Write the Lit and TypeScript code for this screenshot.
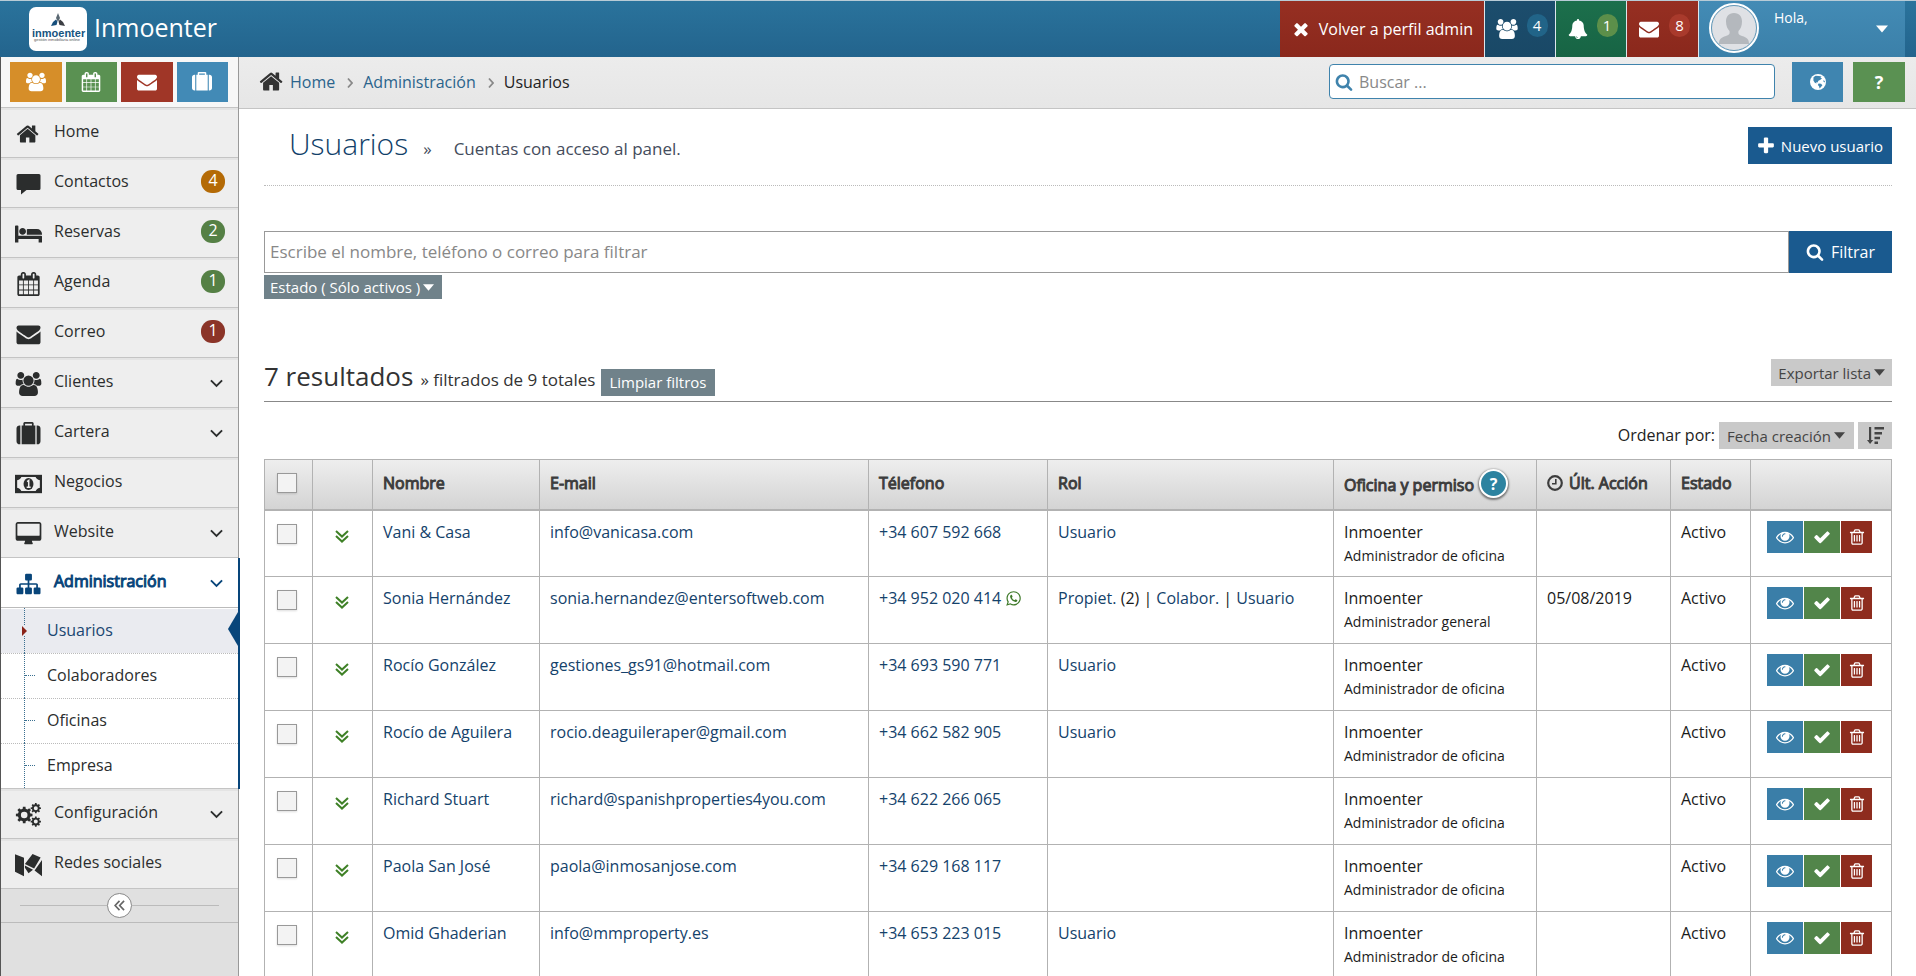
import { LitElement, html, css, svg, nothing } from "lit";
import { customElement, property, state } from "lit/decorators.js";
import { classMap } from "lit/directives/class-map.js";

type Glyph = { box: string; body: unknown };

/* Closed outline of a toothed wheel, plus its hub as a hole. */
const gear = (cx: number, cy: number, r: number, hole: number, teeth: number) => {
  const pts: string[] = [];
  for (let i = 0; i < teeth; i++) {
    const a = (i * 2 * Math.PI) / teeth;
    const s = (2 * Math.PI) / teeth;
    for (const [k, q] of [[-0.3, 0.76], [-0.2, 1], [0.2, 1], [0.3, 0.76]]) {
      pts.push(`${(cx + r * q * Math.cos(a + s * k)).toFixed(2)} ${(cy + r * q * Math.sin(a + s * k)).toFixed(2)}`);
    }
  }
  return `M${pts.join("L")}ZM${cx - hole} ${cy}a${hole} ${hole} 0 1 0 ${hole * 2} 0a${hole} ${hole} 0 1 0 ${-hole * 2} 0Z`;
};

const solid = (box: string, d: string): Glyph => ({
  box,
  body: svg`<path fill="currentColor" fill-rule="evenodd" d=${d}></path>`,
});
const SQ = "0 0 1792 1792";

const GLYPHS: Record<string, Glyph> = {
  home: solid(SQ, "M1408 992v480q0 26-19 45t-45 19h-384v-384h-256v384h-384q-26 0-45-19t-19-45v-480q0-1 .5-3t.5-3l575-474 575 474q1 2 1 6zm223-69l-62 74q-8 9-21 11h-3q-13 0-21-7l-692-577-692 577q-12 8-24 7-13-2-21-11l-62-74q-8-10-7-23.5t11-21.5l719-599q32-26 76-26t76 26l244 204v-195q0-14 9-23t23-9h192q14 0 23 9t9 23v408l219 182q10 8 11 21.5t-7 23.5z"),
  search: solid(SQ, "M1216 832q0-185-131.5-316.5t-316.5-131.5-316.5 131.5-131.5 316.5 131.5 316.5 316.5 131.5 316.5-131.5 131.5-316.5zm512 832q0 52-38 90t-90 38q-54 0-90-38l-343-342q-179 124-399 124-143 0-273.5-55.5t-225-150-150-225-55.5-273.5 55.5-273.5 150-225 225-150 273.5-55.5 273.5 55.5 225 150 150 225 55.5 273.5q0 220-124 399l343 343q37 37 37 90z"),
  mail: solid(SQ, "M1792 710v794q0 66-47 113t-113 47h-1472q-66 0-113-47t-47-113v-794q44 49 101 87 362 246 497 345 57 42 92.5 65.5t94.5 48 110 24.5h2q51 0 110-24.5t94.5-48 92.5-65.5q170-123 498-345 57-39 100-87zm0-294q0 79-49 151t-122 123q-376 261-468 325-10 7-42.5 31t-54 38.5-52 32.5-57.5 27-50 9h-2q-23 0-50-9t-57.5-27-52-32.5-54-38.5-42.5-31q-91-64-262-182.5t-205-142.5q-62-42-117-115.5t-55-136.5q0-78 41.5-130t118.5-52h1472q65 0 112.5 47t47.5 113z"),
  check: solid(SQ, "M1671 566q0 40-28 68l-724 724-136 136q-28 28-68 28t-68-28l-136-136-362-362q-28-28-28-68t28-68l136-136q28-28 68-28t68 28l294 295 656-657q28-28 68-28t68 28l136 136q28 28 28 68z"),
  times: solid(SQ, "M1490 1322q0 40-28 68l-136 136q-28 28-68 28t-68-28l-294-294-294 294q-28 28-68 28t-68-28l-136-136q-28-28-28-68t28-68l294-294-294-294q-28-28-28-68t28-68l136-136q28-28 68-28t68 28l294 294 294-294q28-28 68-28t68 28l136 136q28 28 28 68t-28 68l-294 294 294 294q28 28 28 68z"),
  plus: solid(SQ, "M1600 736v192q0 40-28 68t-68 28h-416v416q0 40-28 68t-68 28h-192q-40 0-68-28t-28-68v-416h-416q-40 0-68-28t-28-68v-192q0-40 28-68t68-28h416v-416q0-40 28-68t68-28h192q40 0 68 28t28 68v416h416q40 0 68 28t28 68z"),
  eye: solid(SQ, "M1664 960q-152-236-381-353 61 104 61 225 0 185-131.5 316.5t-316.5 131.5-316.5-131.5-131.5-316.5q0-121 61-225-229 117-381 353 133 205 333.5 326.5t434.5 121.5 434.5-121.5 333.5-326.5zm-720-384q0-20-14-34t-34-14q-125 0-214.5 89.5t-89.5 214.5q0 20 14 34t34 14 34-14 14-34q0-86 61-147t147-61q20 0 34-14t14-34zm848 384q0 34-20 69-140 230-376.5 368.5t-499.5 138.5-499.5-139-376.5-368q-20-35-20-69t20-69q140-229 376.5-368t499.5-139 499.5 139 376.5 368q20 35 20 69z"),
  trash: solid(SQ, "M704 736v576q0 14-9 23t-23 9h-64q-14 0-23-9t-9-23v-576q0-14 9-23t23-9h64q14 0 23 9t9 23zm256 0v576q0 14-9 23t-23 9h-64q-14 0-23-9t-9-23v-576q0-14 9-23t23-9h64q14 0 23 9t9 23zm256 0v576q0 14-9 23t-23 9h-64q-14 0-23-9t-9-23v-576q0-14 9-23t23-9h64q14 0 23 9t9 23zm128 724v-948h-896v948q0 22 7 40.5t14.5 27 10.5 8.5h832q3 0 10.5-8.5t14.5-27 7-40.5zm-672-1076h448l-48-117q-7-9-17-11h-317q-10 2-17 11zm928 32v64q0 14-9 23t-23 9h-96v948q0 83-47 143.5t-113 60.5h-832q-66 0-113-58.5t-47-141.5v-952h-96q-14 0-23-9t-9-23v-64q0-14 9-23t23-9h309l70-167q15-37 54-63t79-26h320q40 0 79 26t54 63l70 167h309q14 0 23 9t9 23z"),
  users: solid("-64 0 1920 1792", "M529 896q-162 5-265 128h-134q-82 0-138-40.5t-56-118.5q0-353 124-353 6 0 43.5 21t97.5 42.5 119 21.5q67 0 133-23-5 37-5 66 0 139 81 256zm1071 637q0 120-73 189.5t-194 69.5h-874q-121 0-194-69.5t-73-189.5q0-53 3.5-103.5t14-109 26.5-108.5 43-97.5 62-81 85.5-53.5 111.5-20q10 0 43 21.5t73 48 107 48 135 21.5 135-21.5 107-48 73-48 43-21.5q61 0 111.5 20t85.5 53.5 62 81 43 97.5 26.5 108.5 14 109 3.5 103.5zm-1024-1277q0 106-75 181t-181 75-181-75-75-181 75-181 181-75 181 75 75 181zm704 384q0 159-112.5 271.5t-271.5 112.5-271.5-112.5-112.5-271.5 112.5-271.5 271.5-112.5 271.5 112.5 112.5 271.5zm576 225q0 78-56 118.5t-138 40.5h-134q-103-123-265-128 81-117 81-256 0-29-5-66 66 23 133 23 59 0 119-21.5t97.5-42.5 43.5-21q124 0 124 353zm-128-609q0 106-75 181t-181 75-181-75-75-181 75-181 181-75 181 75 75 181z"),
  calendar: solid(SQ, "M192 1664h288v-288h-288v288zm352 0h320v-288h-320v288zm-352-352h288v-320h-288v320zm352 0h320v-320h-320v320zm-352-384h288v-288h-288v288zm736 736h320v-288h-320v288zm-384-736h320v-288h-320v288zm768 736h288v-288h-288v288zm-384-352h320v-320h-320v320zm-352-864v-288q0-13-9.5-22.5t-22.5-9.5h-64q-13 0-22.5 9.5t-9.5 22.5v288q0 13 9.5 22.5t22.5 9.5h64q13 0 22.5-9.5t9.5-22.5zm736 864h288v-320h-288v320zm-384-384h320v-288h-320v288zm384 0h288v-288h-288v288zm32-480v-288q0-13-9.5-22.5t-22.5-9.5h-64q-13 0-22.5 9.5t-9.5 22.5v288q0 13 9.5 22.5t22.5 9.5h64q13 0 22.5-9.5t9.5-22.5zm384-64v1280q0 52-38 90t-90 38h-1408q-52 0-90-38t-38-90v-1280q0-52 38-90t90-38h128v-96q0-66 47-113t113-47h64q66 0 113 47t47 113v96h384v-96q0-66 47-113t113-47h64q66 0 113 47t47 113v96h128q52 0 90 38t38 90z"),
  suitcase: solid(SQ, "M640 256h512v-128h-512v128zm-352 0v1408h-64q-92 0-158-66t-66-158v-960q0-92 66-158t158-66h64zm1120 0v1408h-1024v-1408h128v-160q0-40 28-68t68-28h576q40 0 68 28t28 68v160h128zm384 224v960q0 92-66 158t-158 66h-64v-1408h64q92 0 158 66t66 158z"),
  bell: solid(SQ, "M912 1696q0-16-16-16-59 0-101.5-42.5t-42.5-101.5q0-16-16-16t-16 16q0 73 51.5 124.5t124.5 51.5q16 0 16-16zm816-288q0 52-38 90t-90 38h-448q0 106-75 181t-181 75-181-75-75-181h-448q-52 0-90-38t-38-90q50-42 91-88t85-119.5 74.5-158.5 50-206 19.5-260q0-152 117-282.5t307-158.5q-8-19-8-39 0-40 28-68t68-28 68 28 28 68q0 20-8 39 190 28 307 158.5t117 282.5q0 139 19.5 260t50 206 74.5 158.5 85 119.5 91 88z"),
  bed: solid("0 256 2048 1280", "M256 1024h1728q26 0 45 19t19 45v448h-256v-256h-1536v256h-256v-1216q0-26 19-45t45-19h128q26 0 45 19t19 45v704zm576-320q0-106-75-181t-181-75-181 75-75 181 75 181 181 75 181-75 75-181zm1216 256v-64q0-159-112.5-271.5t-271.5-112.5h-704q-26 0-45 19t-19 45v384h1152z"),
  desktop: solid("-64 0 1920 1792", "M1728 992v-832q0-13-9.5-22.5t-22.5-9.5h-1600q-13 0-22.5 9.5t-9.5 22.5v832q0 13 9.5 22.5t22.5 9.5h1600q13 0 22.5-9.5t9.5-22.5zm128-832v1088q0 66-47 113t-113 47h-544q0 37 16 77.5t32 71 16 43.5q0 26-19 45t-45 19h-512q-26 0-45-19t-19-45q0-14 16-44t32-70 16-78h-544q-66 0-113-47t-47-113v-1088q0-66 47-113t113-47h1600q66 0 113 47t47 113z"),
  sitemap: solid(SQ, "M1792 1248v320q0 40-28 68t-68 28h-320q-40 0-68-28t-28-68v-320q0-40 28-68t68-28h96v-192h-512v192h96q40 0 68 28t28 68v320q0 40-28 68t-68 28h-320q-40 0-68-28t-28-68v-320q0-40 28-68t68-28h96v-192h-512v192h96q40 0 68 28t28 68v320q0 40-28 68t-68 28h-320q-40 0-68-28t-28-68v-320q0-40 28-68t68-28h96v-192q0-52 38-90t90-38h512v-192h-96q-40 0-68-28t-28-68v-320q0-40 28-68t68-28h320q40 0 68 28t28 68v320q0 40-28 68t-68 28h-96v192h512q52 0 90 38t38 90v192h96q40 0 68 28t28 68z"),
  whatsapp: solid(SQ, "M1113 974q13 0 97.5 44t89.5 53q2 5 2 15 0 33-17 76-16 39-71 65.5t-102 26.5q-57 0-190-62-98-45-170-118t-148-185q-72-107-71-194v-8q3-91 74-158 24-22 52-22 6 0 18 1.5t19 1.5q19 0 26.5 6.5t15.5 27.5q8 20 33 88t25 75q0 21-34.5 57.5t-34.5 46.5q0 7 5 15 34 73 102 137 56 53 151 101 12 7 22 7 15 0 54-48.5t52-48.5zm-203 530q127 0 243.5-50t200.5-134 134-200.5 50-243.5-50-243.5-134-200.5-200.5-134-243.5-50-243.5 50-200.5 134-134 200.5-50 243.5q0 203 120 368l-79 233 242-77q158 104 345 104zm0-1382q153 0 292.5 60t240.5 161 161 240.5 60 292.5-60 292.5-161 240.5-240.5 161-292.5 60q-195 0-365-94l-417 134 136-405q-108-178-108-389 0-153 60-292.5t161-240.5 240.5-161 292.5-60z"),
  comment: solid("0 0 24 24", "M1.500 2H22.500Q24 2 24 3.500V16.500Q24 18 22.500 18H10L4.500 22.600V18H1.500Q0 18 0 16.500V3.500Q0 2 1.500 2Z"),
  cogs: solid("0 0 25 24", gear(8.2, 12, 8.400, 3.300, 8) + gear(19.800, 5.200, 5.200, 2, 8) + gear(19.800, 18.600, 5.200, 2, 8)),
  money: {
    box: "0 0 25 17",
    body: svg`<rect x="1" y="1" width="23" height="15" fill="none" stroke="currentColor" stroke-width="2"></rect>
      <path fill="currentColor" d="M1 1H6A5 4 0 0 1 1 5ZM24 1V5A5 4 0 0 1 19 1ZM1 16V12A5 4 0 0 1 6 16ZM24 16H19A5 4 0 0 1 24 12Z"></path>
      <ellipse cx="12.500" cy="8.500" rx="4.600" ry="5.600" fill="currentColor"></ellipse>
      <path d="M11.200 6.200L12.700 5.200V11.400M10.800 11.500H14.500" fill="none" stroke="#eee" stroke-width="1.400"></path>`,
  },
  social: {
    box: "0 0 24 20",
    body: svg`<path fill="currentColor" d="M0 0.500L8 3.600V20L0 16ZM8.800 9L15.600 0.200L22.800 3.400L17 13.200ZM8.800 10.400L16 14.200L12 17.400L8.800 12.500ZM24 5.500V20L17.400 14.800Z"></path>`,
  },
  globe: {
    box: "0 0 16 16",
    body: svg`<circle cx="8" cy="8" r="8" fill="currentColor"></circle>
      <path fill="#3f85b0" d="M3.500 3.200L5.600 1.800L9 2L11.600 2.400L10.400 3.600L12 4.600L10 6L8.400 6.800L7.600 8.400L6 8.200L6.600 9.600L4.800 8.800L3.400 6.600ZM8.600 9.600L11 9.800L12.400 11.200L11 13L9.600 14.400L9 12.200L7.800 11ZM13.600 6L15 7.400L14.400 8.600L13.400 7.400Z"></path>`,
  },
  clock: {
    box: "0 0 16 16",
    body: svg`<circle cx="8" cy="8" r="6.800" fill="none" stroke="currentColor" stroke-width="2.200"></circle>
      <path d="M8.800 4V8.800H5" fill="none" stroke="currentColor" stroke-width="1.600"></path>`,
  },
  sort: {
    box: "0 0 17 17",
    body: svg`<path fill="currentColor" d="M2 0H4.200V13H6.200L3.100 17L0 13H2ZM7.500 0H17V2.500H7.500ZM7.500 5H15V7.400H7.500ZM7.500 9.800H13V12.200H7.500ZM7.500 14.500H11V17H7.500Z"></path>`,
  },
  chevron: {
    box: "0 0 14 9",
    body: svg`<path d="M1 1.200L7 7.200L13 1.200" fill="none" stroke="currentColor" stroke-width="2"></path>`,
  },
  crumb: {
    box: "0 0 6 12",
    body: svg`<path d="M1 1.500L5 6L1 10.500" fill="none" stroke="currentColor" stroke-width="1.800"></path>`,
  },
  expand: {
    box: "0 0 14 13",
    body: svg`<path d="M1 1L7 6.600L13 1M1 6L7 11.600L13 6" fill="none" stroke="currentColor" stroke-width="2"></path>`,
  },
  collapse: {
    box: "0 0 12 12",
    body: svg`<path d="M6 1L1.200 6L6 11M11 1L6.200 6L11 11" fill="none" stroke="currentColor" stroke-width="1.800"></path>`,
  },
  caret: { box: "0 0 10 6", body: svg`<path fill="currentColor" d="M0 0H10L5 6Z"></path>` },
};

@customElement("ui-icon")
class UiIcon extends LitElement {
  @property() name = "home";
  static styles = css`
    :host { display: inline-flex; width: 16px; height: 16px; flex: none; }
    .glyph { display: block; width: 100%; height: 100%; }
  `;
  render() {
    const g = GLYPHS[this.name];
    return html`<svg class="glyph" viewBox=${g.box} aria-hidden="true">${g.body}</svg>`;
  }
}

const shared = css`
  * { box-sizing: border-box; }
  button, input, select { font: inherit; color: inherit; margin: 0; padding: 0; border: 0; border-radius: 0; background: none; }
  button { cursor: pointer; display: inline-flex; align-items: center; justify-content: center; }
  a { text-decoration: none; color: inherit; }
  .heavy { -webkit-text-stroke: 1px currentColor; }
`;

@customElement("top-bar")
class TopBar extends LitElement {
  static styles = [shared, css`
    :host { display: block; }
    .bar { display: flex; height: 57px; border-top: 1px solid #b8cbd6; padding: 0 11px 0 29px; background: linear-gradient(#2a739c, #23648d); color: #fff; }
    .brand { display: flex; align-items: center; gap: 7px; font-size: 25px; }
    .name { padding-bottom: 4px; }
    .logo { display: block; width: 58px; height: 44px; }
    .logo-name { font: 700 11px "Liberation Sans", sans-serif; fill: #16547f; }
    .logo-sub { font: 4px "Liberation Sans", sans-serif; fill: #555; }
    .tools { display: flex; margin-left: auto; }
    .tool { border-right: 1px solid #dde6eb; gap: 9px; height: 56px; }
    .back { background: linear-gradient(#962f22, #8a281c); padding: 0 11px; gap: 8px; }
    .back ui-icon { width: 20px; height: 20px; }
    .tile { width: 71px; padding-left: 3px; }
    .count { width: 21px; height: 23px; border-radius: 11px; font-size: 15px; line-height: 22px; text-align: center; margin-bottom: 7px; }
    .navy { background: linear-gradient(#1c4d6d, #194866); }
    .navy .count { background: #216488; }
    .green { background: linear-gradient(#1c6f4c, #176444); }
    .green .count { background: #5c8f4a; }
    .red { background: linear-gradient(#962f22, #8a281c); width: 72px; }
    .red .count { background: #a93a2c; }
    .big { width: 22px; height: 20px; }
    .bell { width: 20px; height: 20px; }
    .user { display: flex; width: 206px; padding: 2px 17px 0 10px; background: linear-gradient(#438bb5, #3b80a9); align-items: flex-start; justify-content: flex-start; height: 56px; }
    .avatar { width: 50px; height: 50px; flex: none; }
    .hello { font-size: 14px; line-height: 20px; margin: 5px auto 0 15px; }
    .more { width: 12px; height: 8px; margin-top: 22px; }
  `];
  render() {
    return html`<header class="bar">
      <a class="brand" href="#">
        <svg class="logo" viewBox="0 0 58 44" role="img" aria-label="inmoenter">
          <rect width="58" height="44" rx="7" fill="#fff"></rect>
          <path d="M29 6L31 11L29.500 14H28.500L27 11Z" fill="#5a6872"></path>
          <path d="M28.500 14.500L27.500 18L22 19L24 15L27 12.500Z" fill="#174f7c"></path>
          <path d="M29.500 14.500L30.500 18L36 19L34 15L31 12.500Z" fill="#3c3f44"></path>
          <text class="logo-name" x="3" y="30">inmoenter</text>
          <text class="logo-sub" x="5" y="34">gestión inmobiliaria online</text>
        </svg>
        <span class="name">Inmoenter</span>
      </a>
      <div class="tools">
        <button class="tool back"><ui-icon name="times"></ui-icon>Volver a perfil admin</button>
        <button class="tool tile navy" aria-label="Usuarios"><ui-icon class="big" name="users"></ui-icon><span class="count">4</span></button>
        <button class="tool tile green" aria-label="Avisos"><ui-icon class="bell" name="bell"></ui-icon><span class="count">1</span></button>
        <button class="tool tile red" aria-label="Correo"><ui-icon class="big" name="mail"></ui-icon><span class="count">8</span></button>
        <button class="user">
          <svg class="avatar" viewBox="0 0 50 50" aria-hidden="true">
            <circle cx="25" cy="25" r="24" fill="#dfe1e5" stroke="#fff" stroke-width="2"></circle>
            <circle cx="25" cy="25" r="22.500" fill="none" stroke="#5f97b8" stroke-width="1"></circle>
            <path d="M25 10C30.500 10 33 14 33 18.500C33 23 31.500 26 29.500 28C29 31 30 32 33 33C38 34.600 40 36 40 41H10C10 36 12 34.600 17 33C20 32 21 31 20.500 28C18.500 26 17 23 17 18.500C17 14 19.500 10 25 10Z" fill="#b4b8bd"></path>
          </svg>
          <span class="hello">Hola,</span>
          <ui-icon class="more" name="caret"></ui-icon>
        </button>
      </div>
    </header>`;
  }
}

type Entry = { icon: string; label: string; badge?: string; tone?: string; open?: boolean; sub?: string[]; more?: boolean };
const MENU: Entry[] = [
  { icon: "home", label: "Home" },
  { icon: "comment", label: "Contactos", badge: "4", tone: "amber" },
  { icon: "bed", label: "Reservas", badge: "2", tone: "leaf" },
  { icon: "calendar", label: "Agenda", badge: "1", tone: "leaf" },
  { icon: "mail", label: "Correo", badge: "1", tone: "brick" },
  { icon: "users", label: "Clientes", more: true },
  { icon: "suitcase", label: "Cartera", more: true },
  { icon: "money", label: "Negocios" },
  { icon: "desktop", label: "Website", more: true },
  { icon: "sitemap", label: "Administración", more: true, open: true, sub: ["Usuarios", "Colaboradores", "Oficinas", "Empresa"] },
  { icon: "cogs", label: "Configuración", more: true },
  { icon: "social", label: "Redes sociales" },
];

@customElement("side-nav")
class SideNav extends LitElement {
  static styles = [shared, css`
    :host { display: block; width: 240px; flex: none; }
    .nav { height: 100%; width: 239px; border-left: 1px solid #555; border-right: 1px solid #999; background: #e0e0e0; color: #2b2d2d; }
    .quick { display: flex; gap: 4px; padding: 5px 10px 5px 9px; height: 51px; background: #f7f7f7; border-bottom: 1px solid #c4c4c4; color: #fff; }
    .sq { flex: 1; height: 40px; }
    .sq ui-icon { width: 20px; height: 20px; }
    .amber { background: #d68e29; } .leaf { background: #5a9152; } .brick { background: #a03627; } .sky { background: #428ab6; }
    .list { list-style: none; margin: 0; padding: 0; }
    .row { display: flex; align-items: center; height: 50px; padding: 0 13px 3px 14px; border-bottom: 1px solid #c4c4c4; background: linear-gradient(#e4e4e4 2px, #eee 2px); }
    .row ui-icon.lead { width: 27px; height: 24px; margin: 5px 12px 0 0; }
    .text { flex: 1; }
    .badge { width: 24px; height: 23px; border-radius: 11px; color: #fff; font-size: 16px; line-height: 21px; text-align: center; }
    .badge.amber { background: #b46a06; } .badge.leaf { background: #558045; } .badge.brick { background: #8b3428; }
    .arrow { width: 13px; height: 9px; margin: 4px 2px 0 0; }
    .open { background: #fff; color: #08457a; border-color: #bbb; }
    .active { margin-right: -2px; border-right: 2px solid #08457a; background: #fff; position: relative; }
    .sub { list-style: none; margin: 0; padding: 0; border-bottom: 1px solid #c4c4c4; background: #fff; }
    .leafrow { display: flex; align-items: center; height: 45px; padding: 0 0 0 23px; border-top: 1px dotted #bbb; position: relative; }
    .leafrow.current { border-top: 1px solid #fff; background: #eaebf0; color: #1a4670; }
    .stem { align-self: stretch; width: 11px; margin: -1px 12px 0 0; border-left: 1px dotted #3a6f90; display: flex; align-items: center; }
    .stem::before { content: ""; flex: 1; border-top: 1px dotted #3a6f90; }
    .current .stem::before { flex: none; margin-left: -3px; border: 5px solid transparent; border-left: 5px solid #8b2318; border-right: 0; background: #eaebf0; }
    .subtext { padding-bottom: 3px; }
    .flag { position: absolute; right: 0; top: 3px; width: 10px; height: 34px; background: #08457a; clip-path: polygon(100% 0, 0 50%, 100% 100%); }
    .fold { height: 34px; display: flex; align-items: center; padding: 0 19px; border-bottom: 1px solid #bbb; }
    .fold::before, .fold::after { content: ""; flex: 1; border-top: 1px solid #bbb; }
    .knob { width: 25px; height: 25px; border: 1px solid #888; border-radius: 50%; background: #fff; color: #666; }
    .knob ui-icon { width: 11px; height: 11px; }
  `];
  render() {
    return html`<nav class="nav" aria-label="Principal">
      <div class="quick">
        <button class="sq amber" aria-label="Clientes"><ui-icon name="users"></ui-icon></button>
        <button class="sq leaf" aria-label="Agenda"><ui-icon name="calendar"></ui-icon></button>
        <button class="sq brick" aria-label="Correo"><ui-icon name="mail"></ui-icon></button>
        <button class="sq sky" aria-label="Cartera"><ui-icon name="suitcase"></ui-icon></button>
      </div>
      <ul class="list">
        ${MENU.map((m) => html`<li class=${classMap({ active: !!m.open })}>
          <a class=${classMap({ row: true, open: !!m.open })} href="#">
            <ui-icon class="lead" name=${m.icon}></ui-icon>
            <span class=${classMap({ text: true, heavy: !!m.open })}>${m.label}</span>
            ${m.badge ? html`<span class="badge ${m.tone}">${m.badge}</span>` : nothing}
            ${m.more ? html`<ui-icon class="arrow" name="chevron"></ui-icon>` : nothing}
          </a>
          ${m.sub ? html`<ul class="sub">${m.sub.map((s, i) => html`<li>
            <a class=${classMap({ leafrow: true, current: i === 0 })} href="#"><span class="stem"></span><span class="subtext">${s}</span>${i === 0 ? html`<span class="flag"></span>` : nothing}</a>
          </li>`)}</ul>` : nothing}
        </li>`)}
      </ul>
      <div class="fold"><button class="knob" aria-label="Plegar menú"><ui-icon name="collapse"></ui-icon></button></div>
    </nav>`;
  }
}

type User = { name: string; mail: string; phone: string; wa?: boolean; role: string; scope: string; last?: string };
const OFFICE = "Administrador de oficina";
const USERS: User[] = [
  { name: "Vani & Casa", mail: "info@vanicasa.com", phone: "+34 607 592 668", role: "user", scope: OFFICE },
  { name: "Sonia Hernández", mail: "sonia.hernandez@entersoftweb.com", phone: "+34 952 020 414", wa: true, role: "all", scope: "Administrador general", last: "05/08/2019" },
  { name: "Rocío González", mail: "gestiones_gs91@hotmail.com", phone: "+34 693 590 771", role: "user", scope: OFFICE },
  { name: "Rocío de Aguilera", mail: "rocio.deaguileraper@gmail.com", phone: "+34 662 582 905", role: "user", scope: OFFICE },
  { name: "Richard Stuart", mail: "richard@spanishproperties4you.com", phone: "+34 622 266 065", role: "", scope: OFFICE },
  { name: "Paola San José", mail: "paola@inmosanjose.com", phone: "+34 629 168 117", role: "", scope: OFFICE },
  { name: "Omid Ghaderian", mail: "info@mmproperty.es", phone: "+34 653 223 015", role: "user", scope: OFFICE },
];

@customElement("user-table")
class UserTable extends LitElement {
  @state() private picked = new Set<number>();
  static styles = [shared, css`
    :host { display: block; }
    .grid { width: 100%; table-layout: fixed; border-collapse: collapse; line-height: 24px; color: #1b1b1b; }
    .c-check { width: 48px; } .c-open { width: 60px; } .c-name { width: 167px; } .c-mail { width: 329px; } .c-phone { width: 179px; }
    .c-office { width: 203px; } .c-last { width: 134px; } .c-state { width: 80px; } .c-act { width: 141px; }
    th, td { border: 1px solid #b2b2b2; text-align: left; vertical-align: top; padding: 9px 0 0 10px; }
    th { height: 50px; font-weight: 400; color: #3d3d3d; border-bottom: 2px solid #b2b2b2; padding-top: 11px; white-space: nowrap; }
    thead tr { background: linear-gradient(#eee, #d3d3d3); }
    td { height: 67px; }
    td a { color: #14426b; }
    .mid { text-align: center; padding: 13px 3px 0 0; }
    .mid.more { padding-right: 1px; }
    .tick { appearance: none; display: block; width: 20px; height: 20px; margin: 0 auto; border: 1px solid #999; background: #f3f3f3; box-shadow: 0 1px 2px #0002; }
    .tick:checked { background: #3f85b0; }
    .plus { color: #3f8127; padding-top: 6px; }
    .plus ui-icon { width: 14px; height: 13px; }
    .small { font-size: 14px; display: block; }
    .wa { color: #3f7a2a; width: 17px; height: 17px; margin-left: 4px; vertical-align: -3px; }
    .office { display: flex; align-items: center; gap: 5px; }
    .low { padding-top: 13px; }
    .help { width: 29px; height: 29px; margin: -4px 0 -1px; border-radius: 50%; border: 2px solid #fff; background: #2d83a0; color: #fff; font-weight: 700; font-size: 16px; box-shadow: 0 1px 2px 1px #777; }
    .last { display: flex; align-items: center; gap: 6px; }
    .acts { padding: 10px 0 0 16px; }
    .btns { display: flex; gap: 1px; color: #fff; }
    .btn { width: 36px; height: 32px; }
    .btn ui-icon { width: 18px; height: 18px; }
    .view { background: #3a7ea8; } .ok { background: #52854a; } .del { background: #8e2c1e; width: 31px; }
  `];
  private toggle(i: number) {
    const next = new Set(this.picked);
    next.has(i) ? next.delete(i) : next.add(i);
    this.picked = next;
  }
  private toggleAll(e: Event) {
    this.picked = (e.target as HTMLInputElement).checked ? new Set(USERS.map((_, i) => i)) : new Set();
  }
  render() {
    return html`<table class="grid">
      <colgroup><col class="c-check"><col class="c-open"><col class="c-name"><col class="c-mail"><col class="c-phone"><col><col class="c-office"><col class="c-last"><col class="c-state"><col class="c-act"></colgroup>
      <thead><tr>
        <th class="mid"><input class="tick" type="checkbox" aria-label="Seleccionar todos" @change=${this.toggleAll}></th>
        <th></th>
        <th><span class="heavy">Nombre</span></th><th><span class="heavy">E-mail</span></th><th><span class="heavy">Télefono</span></th><th><span class="heavy">Rol</span></th>
        <th class="low"><span class="office"><span class="heavy">Oficina y permiso</span><button class="help" aria-label="Ayuda">?</button></span></th>
        <th><span class="last"><ui-icon name="clock"></ui-icon><span class="heavy">Últ. Acción</span></span></th>
        <th><span class="heavy">Estado</span></th><th></th>
      </tr></thead>
      <tbody>${USERS.map((u, i) => html`<tr>
        <td class="mid"><input class="tick" type="checkbox" aria-label=${u.name} .checked=${this.picked.has(i)} @change=${() => this.toggle(i)}></td>
        <td class="mid more"><button class="plus" aria-label="Desplegar"><ui-icon name="expand"></ui-icon></button></td>
        <td><a href="#">${u.name}</a></td>
        <td><a href="mailto:${u.mail}">${u.mail}</a></td>
        <td><a href="#">${u.phone}${u.wa ? html`<ui-icon class="wa" name="whatsapp"></ui-icon>` : nothing}</a></td>
        <td>${u.role === "all" ? html`<a href="#">Propiet.</a> (2) | <a href="#">Colabor.</a> | ` : nothing}${u.role ? html`<a href="#">Usuario</a>` : nothing}</td>
        <td>Inmoenter<span class="small">${u.scope}</span></td>
        <td>${u.last ?? nothing}</td>
        <td>Activo</td>
        <td class="acts"><div class="btns">
          <button class="btn view" aria-label="Ver"><ui-icon name="eye"></ui-icon></button>
          <button class="btn ok" aria-label="Activar"><ui-icon name="check"></ui-icon></button>
          <button class="btn del" aria-label="Borrar"><ui-icon name="trash"></ui-icon></button>
        </div></td>
      </tr>`)}</tbody>
    </table>`;
  }
}

@customElement("app-root")
class AppRoot extends LitElement {
  static styles = [shared, css`
    :host { display: flex; flex-direction: column; height: 100vh; overflow: hidden; font: 16px/24px "Open Sans", "Noto Sans", sans-serif; background: #fff; color: #222; }
    .body { display: flex; flex: 1; min-height: 0; }
    .main { flex: 1; min-width: 0; overflow: auto; scrollbar-width: none; margin-left: -1px; }
    .crumbs { display: flex; align-items: center; height: 52px; padding: 0 11px 2px 20px; background: linear-gradient(#ececec, #e6e6e6); border-bottom: 1px solid #c4c4c4; }
    .trail { display: flex; align-items: center; }
    .trail a { color: #2b648c; }
    .trail .house { width: 26px; height: 25px; margin-right: 5px; color: #333; }
    .trail .sep { width: 6px; height: 12px; margin: 3px 10px 0 12px; color: #888; }
    .find { display: flex; align-items: center; gap: 6px; margin-left: auto; width: 446px; height: 35px; padding: 0 5px; border: 1px solid #3f83ac; border-radius: 4px; background: #fff; color: #3f83ac; }
    .find ui-icon { width: 18px; height: 18px; }
    .find input { flex: 1; min-width: 0; outline: 0; color: #333; }
    input::placeholder { color: #888; opacity: 1; }
    .quick { width: 51px; height: 40px; color: #fff; margin-left: 17px; background: #3f85b0; }
    .quick.help { width: 52px; margin-left: 10px; background: #5a9152; font-weight: 700; font-size: 18px; }
    .page { padding: 0 24px 0 25px; }
    .head { display: flex; justify-content: space-between; padding: 18px 0 0 25px; height: 77px; border-bottom: 1px dotted #bbb; }
    .title { margin: 0; font-size: 30px; line-height: 34px; font-weight: 300; color: #123f69; display: flex; align-items: baseline; }
    .lead { font-size: 17px; font-weight: 400; color: #444c5c; margin-left: 15px; white-space: pre; }
    .lead + .lead { margin-left: 22px; }
    .primary { background: #1a5a8f; color: #fff; height: 37px; gap: 5px; padding: 0 9px 0 8px; font-size: 15px; }
    .primary ui-icon { width: 20px; height: 20px; }
    .filter { display: flex; margin-top: 45px; }
    .filter input { flex: 1; height: 42px; border: 1px solid #999; padding: 0 5px 2px; font-size: 17px; outline: 0; }
    .filter .primary { width: 103px; height: 42px; font-size: 16px; padding: 0; gap: 7px; }
    .filter .primary ui-icon { width: 18px; height: 18px; }
    .chip { background: #70828a; color: #fff; height: 24px; padding: 0 8px 0 6px; margin-top: 2px; font-size: 15px; gap: 3px; }
    .chip.clear { height: 27px; padding: 0 8px; margin: 6px 0 0 6px; }
    .tri { width: 11px; height: 7px; }
    .sum { display: flex; align-items: center; margin-top: 58px; height: 45px; border-bottom: 1px solid #888; color: #333; }
    .total { display: flex; align-items: baseline; margin: 0 0 2px; font-weight: 400; font-size: 26px; }
    .part { font-size: 17px; margin-left: 7px; }
    .grey { background: #c9c9c9; color: #454545; height: 27px; font-size: 15px; }
    .export { margin: 0 0 13px auto; padding: 0 7px; gap: 3px; }
    .order { display: flex; justify-content: flex-end; align-items: center; margin: 20px 0 10px; }
    .order label { margin: 0 4px 2px 0; }
    .pick { display: grid; align-items: center; width: 135px; }
    .pick select { grid-area: 1 / 1; appearance: none; width: 100%; height: 27px; padding: 0 8px; }
    .pick .tri { grid-area: 1 / 1; justify-self: end; margin-right: 9px; pointer-events: none; }
    .dir { width: 34px; margin-left: 4px; }
    .dir ui-icon { width: 17px; height: 17px; }
  `];
  render() {
    return html`
      <top-bar></top-bar>
      <div class="body">
        <side-nav></side-nav>
        <main class="main">
          <div class="crumbs">
            <nav class="trail" aria-label="Ruta">
              <ui-icon class="house" name="home"></ui-icon><a href="#">Home</a>
              <ui-icon class="sep" name="crumb"></ui-icon><a href="#">Administración</a>
              <ui-icon class="sep" name="crumb"></ui-icon><span>Usuarios</span>
            </nav>
            <label class="find"><ui-icon name="search"></ui-icon><input type="text" placeholder="Buscar ..." aria-label="Buscar"></label>
            <button class="quick" aria-label="Idioma"><ui-icon name="globe"></ui-icon></button>
            <button class="quick help">?</button>
          </div>
          <div class="page">
            <div class="head">
              <h1 class="title">Usuarios<span class="lead">»</span><span class="lead">Cuentas con acceso al panel.</span></h1>
              <button class="primary"><ui-icon name="plus"></ui-icon>Nuevo usuario</button>
            </div>
            <form class="filter" @submit=${(e: Event) => e.preventDefault()}>
              <input type="text" aria-label="Filtrar usuarios" placeholder="Escribe el nombre, teléfono o correo para filtrar">
              <button class="primary"><ui-icon name="search"></ui-icon>Filtrar</button>
            </form>
            <button class="chip">Estado ( Sólo activos )<ui-icon class="tri" name="caret"></ui-icon></button>
            <div class="sum">
              <h2 class="total">7 resultados<span class="part">» filtrados de 9 totales</span></h2>
              <button class="chip clear">Limpiar filtros</button>
              <button class="grey export">Exportar lista<ui-icon class="tri" name="caret"></ui-icon></button>
            </div>
            <div class="order">
              <label for="order">Ordenar por:</label>
              <span class="pick grey"><select id="order"><option>Fecha creación</option></select><ui-icon class="tri" name="caret"></ui-icon></span>
              <button class="grey dir" aria-label="Descendente"><ui-icon name="sort"></ui-icon></button>
            </div>
            <user-table></user-table>
          </div>
        </main>
      </div>`;
  }
}
